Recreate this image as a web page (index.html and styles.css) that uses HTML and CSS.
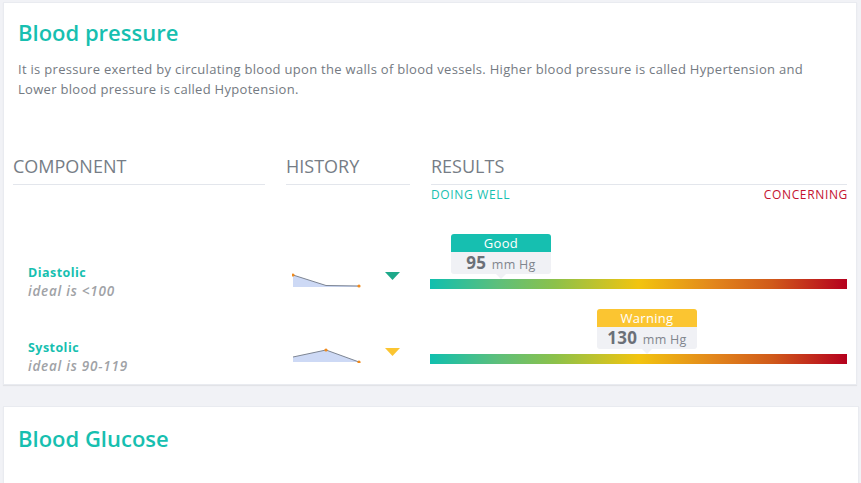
FILE: index.html
```html
<!DOCTYPE html>
<html lang="en">
<head>
<meta charset="utf-8">
<title>Blood pressure</title>
<link rel="stylesheet" href="styles.css">
</head>
<body>
<div class="page">
  <section class="card">
    <h2 class="card-title">Blood pressure</h2>
    <p class="card-desc">It is pressure exerted by circulating blood upon the walls of blood vessels. Higher blood pressure is called Hypertension and Lower blood pressure is called Hypotension.</p>

    <div class="table">
      <div class="grid head">
        <div class="col-head">COMPONENT</div>
        <div class="col-head">HISTORY</div>
        <div class="results-head">
          <div class="col-head">RESULTS</div>
          <div class="scale-labels">
            <span class="well">DOING WELL</span>
            <span class="concern">CONCERNING</span>
          </div>
        </div>
      </div>

      <div class="grid row">
        <div class="component">
          <div class="comp-name">Diastolic</div>
          <div class="comp-ideal">ideal is &lt;100</div>
        </div>
        <div class="history">
          <svg class="spark" width="70" height="15" viewBox="0 0 70 15">
            <polygon points="1,2 34,12.5 67,13 67,14 1,14" fill="#cdd9f5"/>
            <polyline points="1,2 34,12.5 67,13" fill="none" stroke="#7d8593" stroke-width="1"/>
            <circle cx="1" cy="2" r="1.6" fill="#f08a1c"/>
            <circle cx="67" cy="13" r="1.6" fill="#f08a1c"/>
          </svg>
          <svg class="trend" width="15" height="9" viewBox="0 0 15 9"><polygon points="0,0 15,0 7.5,8" fill="#1ea98a"/></svg>
        </div>
        <div class="result">
          <div class="track">
            <div class="tip" style="left: 17.5%">
              <div class="tip-head good">Good</div>
              <div class="tip-body"><b>95</b> mm Hg</div>
            </div>
          </div>
        </div>
      </div>

      <div class="grid row">
        <div class="component">
          <div class="comp-name">Systolic</div>
          <div class="comp-ideal">ideal is 90-119</div>
        </div>
        <div class="history">
          <svg class="spark" width="70" height="15" viewBox="0 0 70 15">
            <polygon points="1,9 34,2 67,14 1,14" fill="#cdd9f5"/>
            <polyline points="1,9 34,2 67,14" fill="none" stroke="#7d8593" stroke-width="1"/>
            <circle cx="34" cy="2" r="1.6" fill="#f08a1c"/>
            <circle cx="67" cy="14" r="1.6" fill="#f08a1c"/>
          </svg>
          <svg class="trend trend-2" width="15" height="9" viewBox="0 0 15 9"><polygon points="0,0 15,0 7.5,8" fill="#fbc531"/></svg>
        </div>
        <div class="result">
          <div class="track">
            <div class="tip" style="left: 52.5%">
              <div class="tip-head warn">Warning</div>
              <div class="tip-body"><b>130</b> mm Hg</div>
            </div>
          </div>
        </div>
      </div>
    </div>
  </section>

  <section class="card card-2">
    <h2 class="card-title">Blood Glucose</h2>
  </section>
</div>
</body>
</html>
```

FILE: styles.css
```css
* { box-sizing: border-box; }
html, body {
  margin: 0;
  padding: 0;
  background: #f1f2f6;
  font-family: "Open Sans", "Noto Sans", sans-serif;
}
.page {
  padding: 2px 4px 0 3px;
  height: 483px;
  overflow: hidden;
}
.card {
  background: #fff;
  border: 1px solid #e9ebf0;
  box-shadow: 0 1px 1px rgba(0, 0, 0, 0.06);
  padding: 14px 9px 10px 9px;
  height: 383px;
}
.card-2 {
  margin-top: 21px;
  margin-right: -2px;
  height: 90px;
}
.card-title {
  margin: 0 0 0 5px;
  font-size: 22px;
  line-height: 30px;
  font-weight: 600;
  color: #17bfb0;
}
.card-2 .card-title {
  margin-top: 2px;
}
.card-desc {
  margin: 12px 0 0 5px;
  font-size: 13px;
  line-height: 20px;
  letter-spacing: 0.3px;
  color: #747a82;
  max-width: 800px;
}
.table {
  margin-top: 55px;
}
.grid {
  display: grid;
  grid-template-columns: 252px 124px 1fr;
  column-gap: 21px;
}
.head {
  align-items: start;
}
.col-head {
  font-size: 18px;
  line-height: 24px;
  color: #767d86;
  padding-bottom: 6px;
  border-bottom: 1px solid #e3e6ec;
}
.scale-labels {
  display: flex;
  justify-content: space-between;
  font-size: 12px;
  line-height: 16px;
  letter-spacing: 0.65px;
  margin-top: 2px;
}
.well { color: #17bfb0; }
.concern { color: #c4112f; margin-right: -1px; }

.row {
  margin-top: 31px;
}
.row + .row {
  margin-top: 8px;
}
.component {
  align-self: end;
  padding: 0 0 1px 15px;
}
.comp-name {
  font-size: 12.5px;
  line-height: 18px;
  font-weight: 700;
  letter-spacing: 0.45px;
  color: #17bfb0;
}
.comp-ideal {
  font-size: 13.5px;
  line-height: 18px;
  font-weight: 600;
  font-style: italic;
  letter-spacing: 0.75px;
  color: #a0a2a6;
}
.history {
  align-self: end;
  display: flex;
  justify-content: space-between;
  align-items: flex-start;
  padding: 0 10px 13px 6px;
}
.spark { display: block; }
.trend { display: block; margin-top: -1px; }
.trend-2 { margin-top: 0; }

.result {
  padding: 45px 0 12px 0;
  margin-left: -1px;
}
.track {
  position: relative;
  height: 10px;
  background: linear-gradient(to right, #10bfae 0%, #5cbf7c 16%, #8cc14a 30%, #f2c40f 50%, #e2861c 68%, #d05a1a 82%, #b5001e 100%);
}
.tip {
  position: absolute;
  bottom: 100%;
  width: 100px;
  margin-left: -52px;
  text-align: center;
}
.tip-head {
  height: 18px;
  line-height: 18px;
  font-size: 13px;
  letter-spacing: 0.3px;
  color: #fff;
  border-radius: 3px 3px 0 0;
}
.tip-head.good { background: #16bfb0; }
.tip-head.warn { background: #fbc531; }
.tip-body {
  position: relative;
  height: 22px;
  line-height: 21px;
  background: #f0f1f5;
  border-radius: 0 0 3px 3px;
  font-size: 12.5px;
  letter-spacing: 0.3px;
  color: #80858d;
  margin-bottom: 5px;
}
.tip-body b {
  font-size: 17px;
  font-weight: 700;
  color: #6b7078;
  margin-right: 2px;
}
.tip-body::after {
  content: "";
  position: absolute;
  left: 50%;
  top: 100%;
  margin-left: -5px;
  border-left: 5px solid transparent;
  border-right: 5px solid transparent;
  border-top: 5px solid #f0f1f5;
}
```
